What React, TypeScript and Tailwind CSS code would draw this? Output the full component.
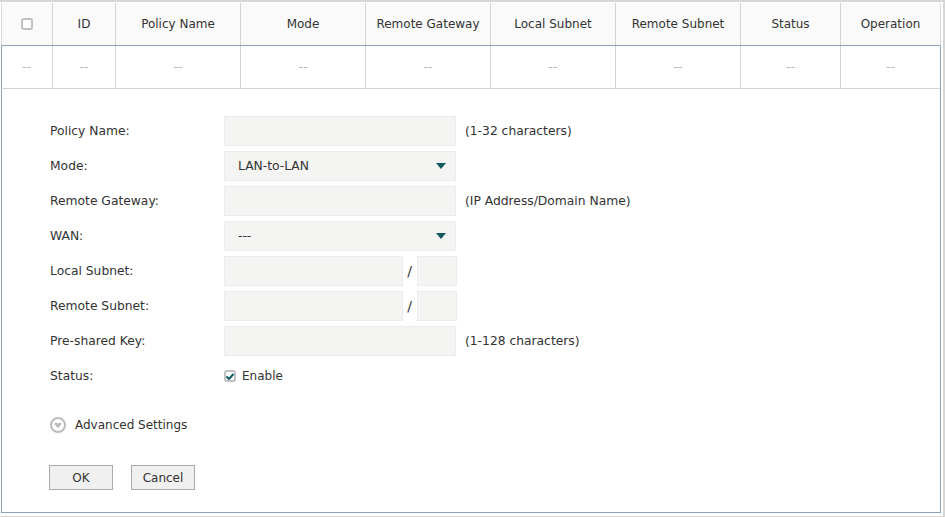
import React from "react";

const cols = [
  { w: "w-[52px]", label: "" },
  { w: "w-[63px]", label: "ID" },
  { w: "w-[125px]", label: "Policy Name" },
  { w: "w-[125px]", label: "Mode" },
  { w: "w-[125px]", label: "Remote Gateway" },
  { w: "w-[125px]", label: "Local Subnet" },
  { w: "w-[125px]", label: "Remote Subnet" },
  { w: "w-[100px]", label: "Status" },
  { w: "flex-1", label: "Operation" },
];

function Arrow() {
  return (
    <svg width="10" height="6" viewBox="0 0 10 6" className="mr-[9px]">
      <path d="M0 0H10L5 6Z" fill="#0f5a60" />
    </svg>
  );
}

function Row({ label, children }: { label: string; children: React.ReactNode }) {
  return (
    <div className="flex items-center h-[30px] mb-[5px]">
      <div className="w-[174px] text-[#333]">{label}</div>
      {children}
    </div>
  );
}

const inputCls = "h-[30px] bg-[#f4f4f3] border border-[#ebebeb]";

function Hint({ children }: { children: React.ReactNode }) {
  return <span className="ml-[9px] text-[#333]">{children}</span>;
}

function Select({ value }: { value: string }) {
  return (
    <div className={`${inputCls} w-[232px] flex items-center justify-between pl-[13px] text-[#333]`}>
      <span>{value}</span>
      <Arrow />
    </div>
  );
}

function Subnet() {
  return (
    <>
      <div className={`${inputCls} w-[179px]`} />
      <span className="w-[14px] pr-px text-center text-[14px] text-[#333]">/</span>
      <div className={`${inputCls} w-[40px]`} />
    </>
  );
}

export default function App() {
  return (
    <div className="w-[945px] h-[517px] bg-white border-t-2 border-b border-r-2 border-[#d6d6d6] pt-px text-[12.3px] leading-none font-['DejaVu_Sans',sans-serif] overflow-hidden">
      <div className="h-[510px] w-[940px] ml-px border-b border-[#8aa2bb] box-border">
        <div className="flex h-[43px] bg-[#fafafa] border-b border-l border-r border-l-[#d9d9d9] border-r-[#d9d9d9] border-b-[#8aa2bb] text-[12px]">
          {cols.map((c, i) => (
            <div key={i} className={`${i === 0 ? "w-[51px]" : c.w} flex items-center justify-center text-[#333] ${i < 8 ? "border-r border-[#d4d4d4]" : ""}`}>
              {i === 0 ? <span className="w-[12px] h-[12px] rounded-[3px] border-2 border-[#c0c0c0] bg-white" /> : <span>{c.label}</span>}
            </div>
          ))}
        </div>
        <div className="h-[466px] border-l border-r border-[#8aa2bb]">
          <div className="flex h-[43px] border-b border-[#d4d4d4] -ml-px">
            {cols.map((c, i) => (
              <div key={i} className={`${c.w} flex items-center justify-center text-[#b5b5b5] ${i < 8 ? "border-r border-[#d4d4d4]" : ""}`}>
                --
              </div>
            ))}
          </div>
          <div className="pl-[48px] pt-[27px]">
            <Row label="Policy Name:">
              <div className={`${inputCls} w-[232px]`} />
              <Hint>(1-32 characters)</Hint>
            </Row>
            <Row label="Mode:">
              <Select value="LAN-to-LAN" />
            </Row>
            <Row label="Remote Gateway:">
              <div className={`${inputCls} w-[232px]`} />
              <Hint>(IP Address/Domain Name)</Hint>
            </Row>
            <Row label="WAN:">
              <Select value="---" />
            </Row>
            <Row label="Local Subnet:">
              <Subnet />
            </Row>
            <Row label="Remote Subnet:">
              <Subnet />
            </Row>
            <Row label="Pre-shared Key:">
              <div className={`${inputCls} w-[232px]`} />
              <Hint>(1-128 characters)</Hint>
            </Row>
            <Row label="Status:">
              <span className="w-[12px] h-[12px] rounded-[3px] border-2 border-[#c0c0c0] bg-white flex items-center justify-center mr-[6px]">
                <svg width="8" height="7" viewBox="0 0 8 7" className="shrink-0">
                  <path d="M0.5 3.5L3 6L7.5 1" fill="none" stroke="#0f5a60" strokeWidth="2" />
                </svg>
              </span>
              <span className="text-[12px] text-[#333]">Enable</span>
            </Row>
            <div className="flex items-center mt-[26px] text-[12px] text-[#333]">
              <svg width="16" height="16" viewBox="0 0 16 16" className="mr-[9px]">
                <circle cx="8" cy="8" r="7" fill="none" stroke="#bbbbbb" strokeWidth="2" />
                <path d="M4.5 6.5C5.5 5.2 7 5.5 8 6.8C9 5.5 10.5 5.2 11.5 6.5C11.5 8 9.5 9.5 8 11C6.5 9.5 4.5 8 4.5 6.5Z" fill="#bbbbbb" />
              </svg>
              <span>Advanced Settings</span>
            </div>
            <div className="flex mt-[32px] gap-[18px] -ml-px text-[12px]">
              <div className="w-[64px] h-[25px] pt-px bg-[#f0f0f0] border border-[#aaa] flex items-center justify-center text-[#333]">OK</div>
              <div className="w-[64px] h-[25px] pt-px bg-[#f0f0f0] border border-[#aaa] flex items-center justify-center text-[#333]">Cancel</div>
            </div>
          </div>
        </div>
      </div>
    </div>
  );
}
